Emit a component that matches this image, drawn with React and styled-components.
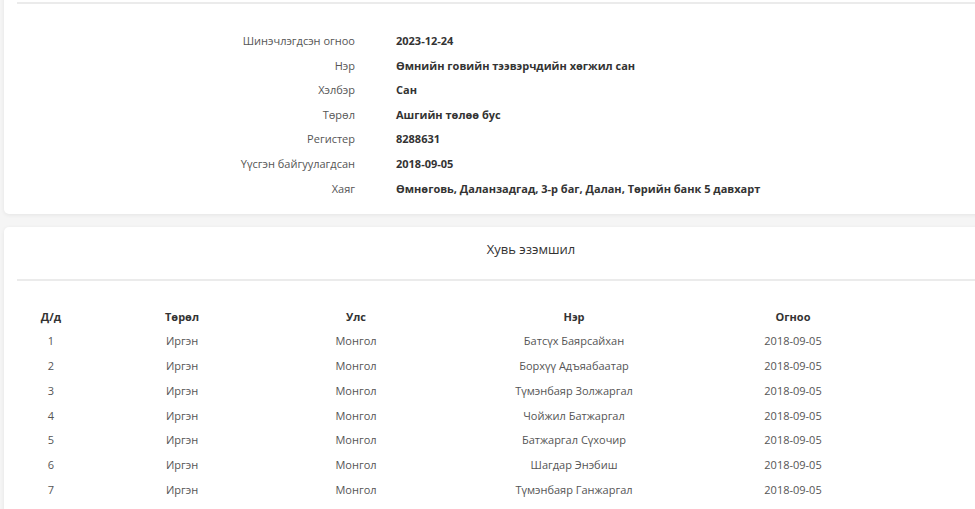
import React from 'react';
import styled, { createGlobalStyle } from 'styled-components';

const GlobalStyle = createGlobalStyle`
  html, body {
    margin: 0;
    padding: 0;
    background: #f5f5f5;
    overflow: hidden;
  }
  body {
    font-family: "Open Sans", "Noto Sans", sans-serif;
    font-size: 11px;
    color: #333;
  }
`;

const info = [
  ['Шинэчлэгдсэн огноо', '2023-12-24'],
  ['Нэр', 'Өмнийн говийн тээвэрчдийн хөгжил сан'],
  ['Хэлбэр', 'Сан'],
  ['Төрөл', 'Ашгийн төлөө бус'],
  ['Регистер', '8288631'],
  ['Үүсгэн байгуулагдсан', '2018-09-05'],
  ['Хаяг', 'Өмнөговь, Даланзадгад, 3-р баг, Далан, Төрийн банк 5 давхарт'],
];

const owners = [
  ['1', 'Иргэн', 'Монгол', 'Батсүх Баярсайхан', '2018-09-05'],
  ['2', 'Иргэн', 'Монгол', 'Борхүү Адъяабаатар', '2018-09-05'],
  ['3', 'Иргэн', 'Монгол', 'Түмэнбаяр Золжаргал', '2018-09-05'],
  ['4', 'Иргэн', 'Монгол', 'Чойжил Батжаргал', '2018-09-05'],
  ['5', 'Иргэн', 'Монгол', 'Батжаргал Сүхочир', '2018-09-05'],
  ['6', 'Иргэн', 'Монгол', 'Шагдар Энэбиш', '2018-09-05'],
  ['7', 'Иргэн', 'Монгол', 'Түмэнбаяр Ганжаргал', '2018-09-05'],
];

const columns = ['Д/д', 'Төрөл', 'Улс', 'Нэр', 'Огноо'];

const App = () => (
  <>
    <GlobalStyle />
    <Page>
      <Card $scrolled>
        <Divider />
        <InfoGrid>
          {info.map(([label, value]) => (
            <React.Fragment key={label}>
              <Label>{label}</Label>
              <Value>{value}</Value>
            </React.Fragment>
          ))}
        </InfoGrid>
      </Card>

      <Card>
        <CardTitle>Хувь эзэмшил</CardTitle>
        <Divider />
        <Table>
          <HeadRow>
            {columns.map((c) => (
              <HeadCell key={c}>{c}</HeadCell>
            ))}
          </HeadRow>
          {owners.map((row) => (
            <Row key={row[0]}>
              {row.map((cell, i) => (
                <Cell key={i}>{cell}</Cell>
              ))}
            </Row>
          ))}
        </Table>
      </Card>
    </Page>
  </>
);

const Page = styled.div`
  display: flex;
  flex-direction: column;
  gap: 13px;
  padding: 0 0 20px 4px;
  width: 1054px;
`;

const Card = styled.section`
  background: #fff;
  border-radius: 5px;
  box-shadow: 0 1px 4px rgba(0, 0, 0, 0.07);
  margin-top: ${(p) => (p.$scrolled ? '-20px' : '0')};
  padding-top: ${(p) => (p.$scrolled ? '22px' : '0')};
`;

const CardTitle = styled.h3`
  margin: 0 0 9px;
  height: 43px;
  display: flex;
  align-items: center;
  justify-content: center;
  font-size: 13px;
  font-weight: 400;
  color: #333;
`;

const Divider = styled.div`
  margin-left: 13px;
  border-top: 2px solid #ebebeb;
`;

const InfoGrid = styled.div`
  display: grid;
  grid-template-columns: 351px 1fr;
  column-gap: 41px;
  padding: 25px 0 13px;
`;

const Label = styled.div`
  text-align: right;
  color: #555;
  line-height: 24.6px;
`;

const Value = styled.div`
  font-weight: 700;
  color: #333;
  line-height: 24.6px;
`;

const Table = styled.div`
  padding: 24px 0 20px 13px;
`;

const HeadRow = styled.div`
  display: grid;
  grid-template-columns: 68px 194px 154px 282px 156px 1fr;
`;

const Row = styled(HeadRow)``;

const HeadCell = styled.div`
  text-align: center;
  font-weight: 700;
  color: #333;
  line-height: 24px;
`;

const Cell = styled.div`
  text-align: center;
  color: #555;
  line-height: 24.8px;
`;

export default App;
